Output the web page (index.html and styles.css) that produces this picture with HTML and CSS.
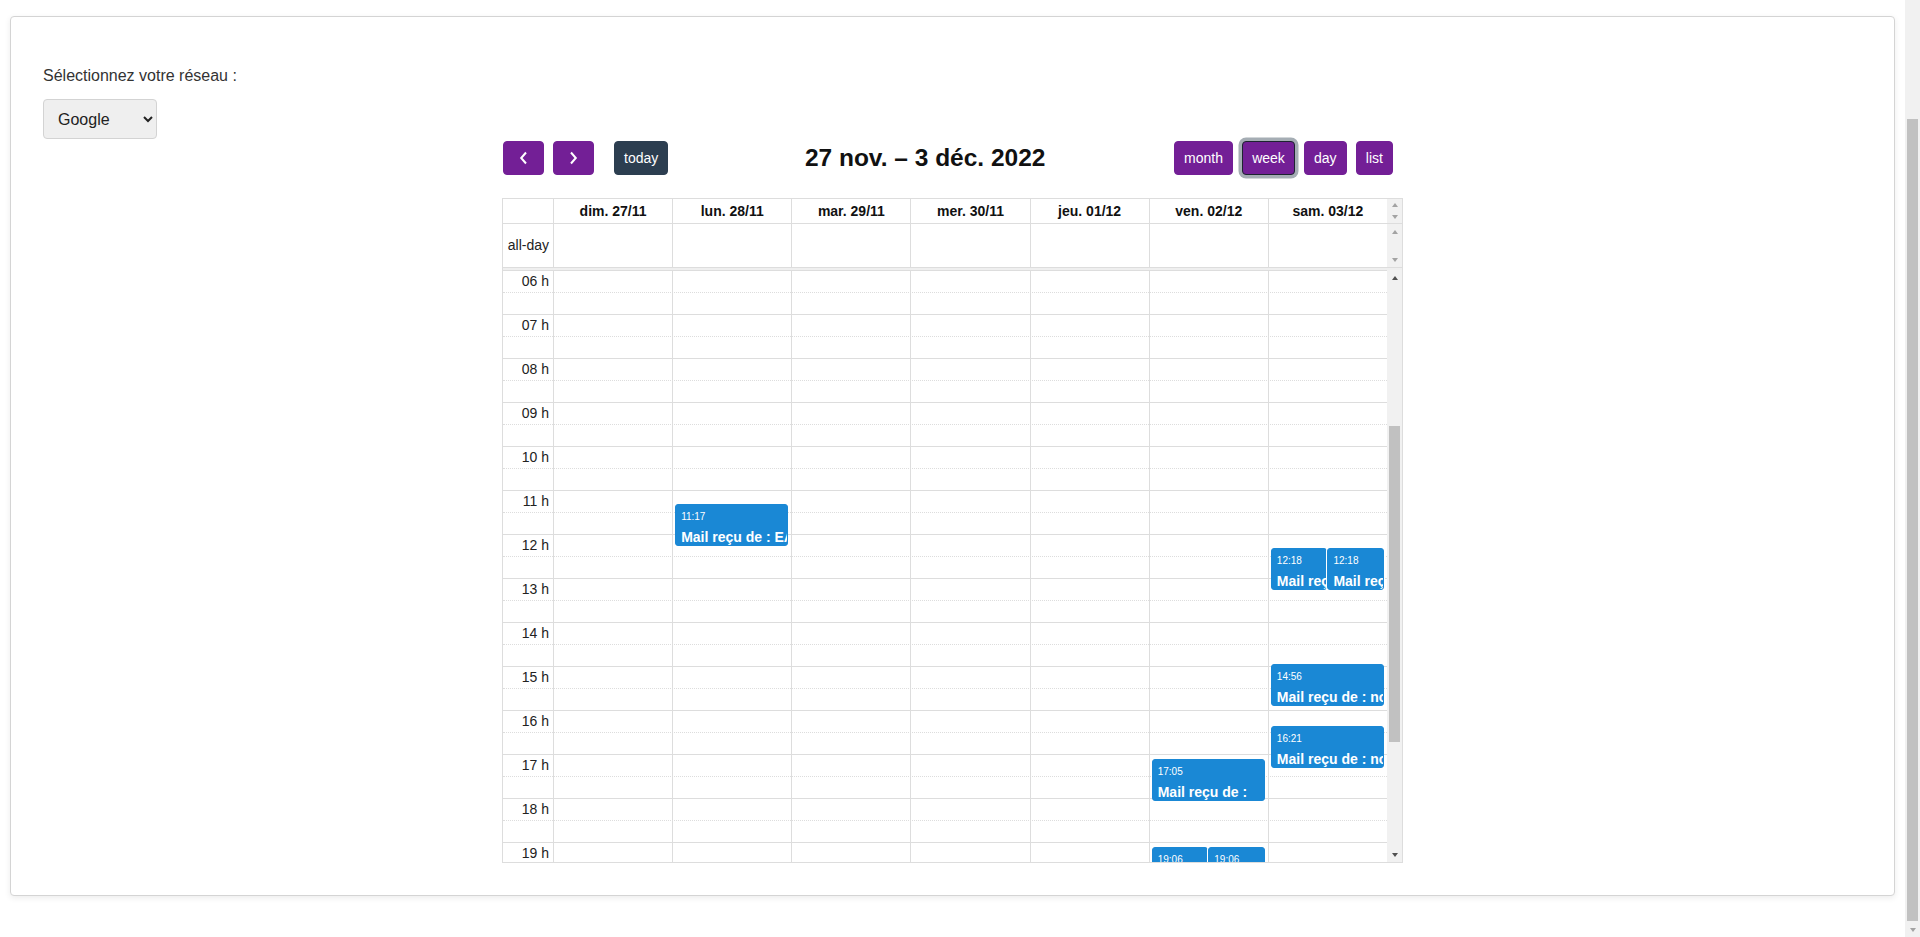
FILE: index.html
```html
<!DOCTYPE html>
<html lang="fr">
<head>
<meta charset="utf-8">
<title>Calendrier</title>
<link rel="stylesheet" href="styles.css">
</head>
<body>
<div class="page">
  <div class="main">
    <div class="card">
      <label class="net-label" for="net">Sélectionnez votre réseau :</label>
      <select id="net" class="net-select">
        <option>Google</option>
        <option>Facebook</option>
        <option>Twitter</option>
      </select>

      <div class="calendar">
        <div class="toolbar">
          <div class="chunk chunk-left">
            <button class="btn btn-icon" type="button" aria-label="prev">
              <svg width="9" height="14" viewBox="0 0 9 14"><polyline points="7,1.5 2.2,7 7,12.5" fill="none" stroke="#fff" stroke-width="2"/></svg>
            </button>
            <button class="btn btn-icon" type="button" aria-label="next">
              <svg width="9" height="14" viewBox="0 0 9 14"><polyline points="2,1.5 6.8,7 2,12.5" fill="none" stroke="#fff" stroke-width="2"/></svg>
            </button>
            <button class="btn btn-today" type="button">today</button>
          </div>
          <h2 class="title">27 nov. – 3 déc. 2022</h2>
          <div class="chunk chunk-right">
            <button class="btn" type="button">month</button>
            <button class="btn btn-active" type="button">week</button>
            <button class="btn" type="button">day</button>
            <button class="btn" type="button">list</button>
          </div>
        </div>

        <div class="grid">
          <div class="row row-head">
            <div class="axis"></div>
            <div class="cell">dim. 27/11</div>
            <div class="cell">lun. 28/11</div>
            <div class="cell">mar. 29/11</div>
            <div class="cell">mer. 30/11</div>
            <div class="cell">jeu. 01/12</div>
            <div class="cell">ven. 02/12</div>
            <div class="cell">sam. 03/12</div>
            <div class="sb sb-head">
              <div class="sb-btn"><i class="tri tri-up light"></i></div>
              <div class="sb-btn"><i class="tri tri-down light"></i></div>
            </div>
          </div>
          <div class="row row-allday">
            <div class="axis axis-label">all-day</div>
            <div class="cell"></div>
            <div class="cell"></div>
            <div class="cell"></div>
            <div class="cell"></div>
            <div class="cell"></div>
            <div class="cell"></div>
            <div class="cell"></div>
            <div class="sb sb-allday">
              <div class="sb-btn"><i class="tri tri-up light"></i></div>
              <div class="sb-btn"><i class="tri tri-down light"></i></div>
            </div>
          </div>
          <div class="divider"></div>

          <div class="body">
            <div class="tg">
              <div class="slots">
                <div class="slot"><span class="slot-label">06 h</span></div>
                <div class="slot slot-half"></div>
                <div class="slot"><span class="slot-label">07 h</span></div>
                <div class="slot slot-half"></div>
                <div class="slot"><span class="slot-label">08 h</span></div>
                <div class="slot slot-half"></div>
                <div class="slot"><span class="slot-label">09 h</span></div>
                <div class="slot slot-half"></div>
                <div class="slot"><span class="slot-label">10 h</span></div>
                <div class="slot slot-half"></div>
                <div class="slot"><span class="slot-label">11 h</span></div>
                <div class="slot slot-half"></div>
                <div class="slot"><span class="slot-label">12 h</span></div>
                <div class="slot slot-half"></div>
                <div class="slot"><span class="slot-label">13 h</span></div>
                <div class="slot slot-half"></div>
                <div class="slot"><span class="slot-label">14 h</span></div>
                <div class="slot slot-half"></div>
                <div class="slot"><span class="slot-label">15 h</span></div>
                <div class="slot slot-half"></div>
                <div class="slot"><span class="slot-label">16 h</span></div>
                <div class="slot slot-half"></div>
                <div class="slot"><span class="slot-label">17 h</span></div>
                <div class="slot slot-half"></div>
                <div class="slot"><span class="slot-label">18 h</span></div>
                <div class="slot slot-half"></div>
                <div class="slot"><span class="slot-label">19 h</span></div>
                <div class="slot slot-half"></div>
                <div class="slot"><span class="slot-label">20 h</span></div>
                <div class="slot slot-half"></div>
              </div>
              <div class="cols">
                <div class="axis-col"></div>
                <div class="col"></div>
                <div class="col">
                  <div class="ev" style="top:234px">
                    <div class="ev-time">11:17</div>
                    <div class="ev-title">Mail reçu de : EARL Dumont</div>
                  </div>
                </div>
                <div class="col"></div>
                <div class="col"></div>
                <div class="col"></div>
                <div class="col">
                  <div class="ev" style="top:489px">
                    <div class="ev-time">17:05</div>
                    <div class="ev-title">Mail reçu de :</div>
                  </div>
                  <div class="ev ev-a" style="top:577px">
                    <div class="ev-time">19:06</div>
                    <div class="ev-title">Mail reçu de :</div>
                  </div>
                  <div class="ev ev-b" style="top:577px">
                    <div class="ev-time">19:06</div>
                    <div class="ev-title">Mail reçu de :</div>
                  </div>
                </div>
                <div class="col">
                  <div class="ev ev-a" style="top:278px">
                    <div class="ev-time">12:18</div>
                    <div class="ev-title">Mail reçu de : noreply</div>
                  </div>
                  <div class="ev ev-b" style="top:278px">
                    <div class="ev-time">12:18</div>
                    <div class="ev-title">Mail reçu de : noreply</div>
                  </div>
                  <div class="ev" style="top:394px">
                    <div class="ev-time">14:56</div>
                    <div class="ev-title">Mail reçu de : noreply</div>
                  </div>
                  <div class="ev" style="top:456px">
                    <div class="ev-time">16:21</div>
                    <div class="ev-title">Mail reçu de : noreply</div>
                  </div>
                </div>
              </div>
            </div>
            <div class="sb sb-main">
              <div class="sb-btn"><i class="tri tri-up"></i></div>
              <div class="sb-thumb"></div>
              <div class="sb-btn sb-btn-end"><i class="tri tri-down"></i></div>
            </div>
          </div>
        </div>
      </div>
    </div>
  </div>
  <div class="page-sb">
    <div class="page-thumb"></div>
    <div class="sb-btn sb-btn-end"><i class="tri tri-down light"></i></div>
  </div>
</div>
</body>
</html>
```

FILE: styles.css
```css
* { box-sizing: border-box; }

html, body {
  margin: 0;
  height: 100%;
}

body {
  font-family: "Liberation Sans", Arial, Helvetica, sans-serif;
  color: #333;
  background: #fff;
  overflow: hidden;
}

.page {
  display: flex;
  height: 937px;
}

.main {
  flex: 1;
  min-width: 0;
  padding: 16px 10px 0;
}

.card {
  background: #fff;
  border: 1px solid #d4d4d4;
  border-radius: 4px;
  box-shadow: 0 2px 6px rgba(0, 0, 0, 0.08);
  padding: 48px 32px 32px;
}

.net-label {
  display: block;
  font-size: 16px;
  line-height: 22px;
  margin-bottom: 12px;
}

.net-select {
  display: block;
  width: 114px;
  height: 40px;
  font-family: inherit;
  font-size: 16px;
  color: #222;
  background-color: #efefef;
  border: 1px solid #d3d3d3;
  border-radius: 4px;
  padding: 0 10px;
}

/* ---------- calendar ---------- */
.calendar {
  width: 901px;
  margin: 2px auto 0;
  font-size: 14px;
  color: #111;
}

.toolbar {
  display: flex;
  align-items: center;
  justify-content: space-between;
  margin-bottom: 23px;
}

.chunk {
  display: flex;
  align-items: center;
}

.chunk-left { margin-left: 1px; }
.chunk-right { margin-right: 10px; }

.btn {
  font-family: inherit;
  font-size: 14px;
  line-height: 21px;
  padding: 5.6px 9.1px;
  border: 1px solid #731f96;
  background: #731f96;
  color: #fff;
  border-radius: 4px;
  margin: 0 0 0 9px;
  cursor: pointer;
}

.chunk .btn:first-child { margin-left: 0; }

.btn-icon {
  width: 41px;
  height: 34.2px;
  padding: 0;
  display: flex;
  align-items: center;
  justify-content: center;
}

.btn-today {
  margin-left: 20px;
  background: #2c3e50;
  border-color: #2c3e50;
}

.btn-active {
  border-color: #1d2330;
  box-shadow: 0 0 0 3.5px rgba(76, 91, 106, 0.5);
}

.title {
  margin: 0 0 0 8px;
  font-size: 24.5px;
  font-weight: bold;
  color: #111;
  line-height: 1.2;
}

/* ---------- grid ---------- */
.grid {
  border: 1px solid #ddd;
}

.row {
  display: grid;
  grid-template-columns: 50px repeat(7, 1fr) 15px;
}

.row-head {
  height: 25px;
  border-bottom: 1px solid #ddd;
}

.row-head .cell {
  border-left: 1px solid #ddd;
  font-weight: bold;
  text-align: center;
  line-height: 24px;
  white-space: nowrap;
}

.row-allday {
  height: 44px;
  border-bottom: 1px solid #ddd;
}

.row-allday .cell {
  border-left: 1px solid #ddd;
}

.axis-label {
  text-align: right;
  padding-right: 4px;
  line-height: 43px;
  color: #222;
}

.divider {
  height: 2px;
  background: #efefef;
}

.body {
  display: flex;
  height: 592px;
}

.tg {
  flex: 1;
  position: relative;
  overflow: hidden;
}

.slot {
  height: 22px;
  border-top: 1px solid #ddd;
  display: flex;
}

.slot-half {
  border-top-style: dotted;
}

.slot-label {
  width: 50px;
  text-align: right;
  padding-right: 4px;
  line-height: 21px;
  color: #222;
}

.cols {
  position: absolute;
  inset: 0;
  display: grid;
  grid-template-columns: 50px repeat(7, 1fr);
}

.col {
  position: relative;
  border-left: 1px solid #ddd;
}

.ev {
  position: absolute;
  left: 2px;
  right: 3px;
  height: 42px;
  background: #1a88d5;
  border: 1px solid #1a88d5;
  border-radius: 3px;
  color: #fff;
  padding: 6px 5px 0;
  overflow: hidden;
  white-space: nowrap;
}

.ev-a { right: calc(50% + 0.5px); }
.ev-b {
  left: calc(50% - 0.5px);
  box-shadow: 0 0 0 1px #fff;
}

.ev-time {
  font-size: 10px;
  line-height: 12px;
}

.ev-title {
  font-size: 14px;
  font-weight: bold;
  line-height: 18px;
  margin-top: 5px;
}

/* ---------- scrollbars ---------- */
.sb {
  background: #f1f1f1;
  display: flex;
  flex-direction: column;
}

.sb-head .sb-btn { flex: 1; height: auto; }
.sb-allday { justify-content: space-between; }

.sb-main { width: 15px; }

.sb-btn {
  height: 15px;
  display: flex;
  align-items: center;
  justify-content: center;
}

.sb-btn-end { margin-top: auto; }

.sb-thumb {
  margin: 141px 2px 0;
  height: 316px;
  background: #c1c1c1;
}

.tri {
  display: block;
  width: 0;
  height: 0;
  border-left: 3.5px solid transparent;
  border-right: 3.5px solid transparent;
}

.tri-up { border-bottom: 4px solid #505050; }
.tri-down { border-top: 4px solid #505050; }
.tri-up.light { border-bottom-color: #a3a3a3; }
.tri-down.light { border-top-color: #a3a3a3; }

.page-sb {
  width: 15px;
  background: #f1f1f1;
  display: flex;
  flex-direction: column;
}

.page-thumb {
  margin: 119px 2px 0;
  height: 802px;
  background: #c1c1c1;
}
```
